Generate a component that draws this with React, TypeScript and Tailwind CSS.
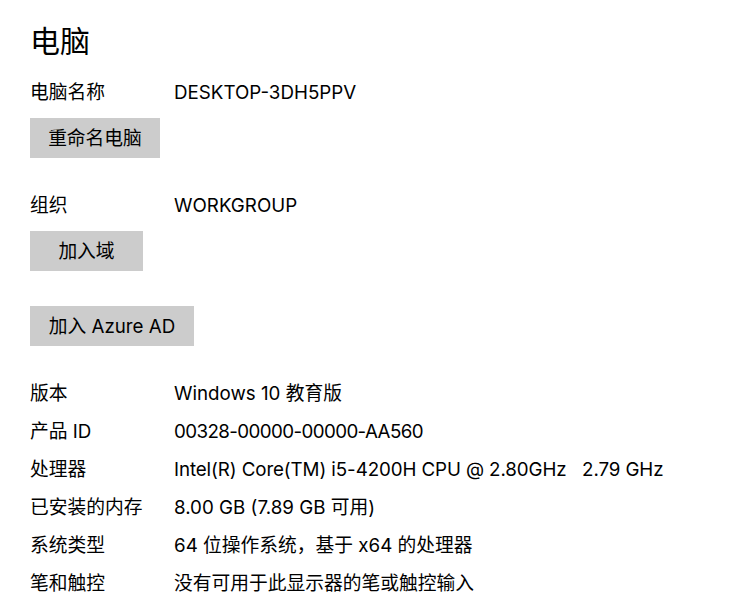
export default function App() {
  const rows: [string, string, string][] = [
    ["版本", "Windows 10 教育版", ""],
    ["产品 ID", "00328-00000-00000-AA560", "tracking-[-0.6px]"],
    ["处理器", "Intel(R) Core(TM) i5-4200H CPU @ 2.80GHz\u00a0\u00a0\u00a02.79 GHz", "tracking-[-0.1px]"],
    ["已安装的内存", "8.00 GB (7.89 GB 可用)", ""],
    ["系统类型", "64 位操作系统，基于 x64 的处理器", ""],
    ["笔和触控", "没有可用于此显示器的笔或触控输入", ""],
  ];
  const font = { fontFamily: 'Inter, "Noto Sans CJK SC", sans-serif' };
  return (
    <div className="w-[729px] h-[597px] overflow-hidden bg-white text-black pl-[30px] pt-[20px]" style={font}>
      <div className="h-[40px] flex items-center pt-[2px] text-[30px] leading-none">电脑</div>
      <div className="mt-[13px] flex h-[38px] items-center pt-[3px] text-[18.75px]">
        <div className="w-[144px] shrink-0">电脑名称</div>
        <div>DESKTOP-3DH5PPV</div>
      </div>
      <button className="mt-[7px] flex h-[40px] w-[130px] items-center justify-center bg-[#cccccc] pt-[2px] text-[18.75px]">重命名电脑</button>
      <div className="mt-[28px] flex h-[38px] items-center pt-[3px] text-[18.75px]">
        <div className="w-[144px] shrink-0">组织</div>
        <div>WORKGROUP</div>
      </div>
      <button className="mt-[7px] flex h-[40px] w-[113px] items-center justify-center bg-[#cccccc] pt-[2px] text-[18.75px]">加入域</button>
      <button className="mt-[35px] flex h-[40px] w-[164px] items-center justify-center bg-[#cccccc] pt-[2px] text-[18.75px]">加入 Azure AD</button>
      <div className="mt-[28px] flex flex-col">
        {rows.map(([k, v, t]) => (
          <div key={k} className="flex h-[38px] items-center pt-[3px] text-[18.75px] whitespace-nowrap">
            <div className="w-[144px] shrink-0">{k}</div>
            <div className={t}>{v}</div>
          </div>
        ))}
      </div>
    </div>
  );
}
